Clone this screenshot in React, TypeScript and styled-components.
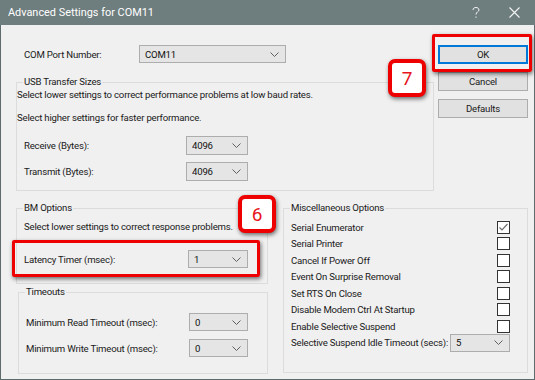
import React from 'react';
import styled, { createGlobalStyle } from 'styled-components';

const GlobalStyle = createGlobalStyle`
  html, body {
    margin: 0;
    padding: 0;
    background: #f0f0f0;
  }
  * {
    box-sizing: border-box;
  }
`;

const FONT = `'Segoe UI', Roboto, 'Noto Sans', sans-serif`;

const Window = styled.div`
  position: relative;
  width: 535px;
  height: 380px;
  display: flex;
  flex-direction: column;
  background: #f0f0f0;
  font-family: ${FONT};
  font-size: 9.6px;
  letter-spacing: -0.2px;
  color: #1a1a1a;
  overflow: hidden;
`;

const TitleBar = styled.div`
  height: 25px;
  flex: none;
  display: flex;
  align-items: center;
  padding-left: 8px;
  background: #6e7d7e;
  color: #ffffff;
  font-size: 10.9px;
  letter-spacing: 0;
`;

const TitleText = styled.span`
  flex: 1;
`;

const TitleButton = styled.div<{ w: number }>`
  width: ${(p) => p.w}px;
  height: 25px;
  display: flex;
  align-items: center;
  justify-content: center;
  color: #f4f4f4;
`;

const Body = styled.div`
  flex: 1;
  border: 1px solid #5d6b6c;
  border-top: none;
  padding: 20px 6px 0 15px;
  display: flex;
  flex-direction: column;
`;

const TopSection = styled.div`
  display: flex;
  gap: 4px;
`;

const LeftColumn = styled.div`
  width: 418px;
  display: flex;
  flex-direction: column;
`;

const ButtonColumn = styled.div`
  width: 90px;
  display: flex;
  flex-direction: column;
  gap: 8px;
`;

const DialogButton = styled.button<{ primary?: boolean }>`
  height: 19px;
  padding: 0;
  background: #e1e1e1;
  border: 1px solid ${(p) => (p.primary ? '#0078d7' : '#adadad')};
  box-shadow: ${(p) => (p.primary ? 'inset 0 0 0 1px #0078d7' : 'none')};
  font-family: ${FONT};
  font-size: 9.6px;
  letter-spacing: -0.2px;
  color: #1a1a1a;
`;

const Row = styled.div<{ labelWidth: number; h?: number }>`
  display: flex;
  align-items: center;
  height: ${(p) => p.h ?? 18}px;
  white-space: nowrap;
  & > span:first-child {
    width: ${(p) => p.labelWidth}px;
    flex: none;
  }
`;

const ComRow = styled(Row)`
  padding-left: 8px;
`;

const Combo = styled.div<{ w: number; h?: number }>`
  width: ${(p) => p.w}px;
  height: ${(p) => p.h ?? 18}px;
  flex: none;
  display: flex;
  align-items: center;
  justify-content: space-between;
  padding: 0 6px 0 5px;
  background: #e5e5e5;
  border: 1px solid #adadad;
  color: #111;
`;

const Group = styled.fieldset<{ w: number; h: number }>`
  width: ${(p) => p.w}px;
  height: ${(p) => p.h}px;
  margin: 0;
  padding: 0 7px 0 7px;
  min-width: 0;
  border: 1px solid #dcdcdc;
  display: flex;
  flex-direction: column;
`;

const Legend = styled.legend`
  padding: 0 1px;
  margin-left: -1px;
  line-height: 14px;
  color: #1a1a1a;
`;

const Note = styled.div<{ mt: number; outdent?: boolean }>`
  margin-top: ${(p) => p.mt}px;
  margin-left: ${(p) => (p.outdent ? -7 : 0)}px;
  line-height: 14px;
  white-space: nowrap;
`;

const BottomSection = styled.div`
  display: flex;
  gap: 15px;
  margin-top: 10px;
`;

const LeftStack = styled.div`
  display: flex;
  flex-direction: column;
  gap: 1px;
`;

const MiscList = styled.div`
  display: flex;
  flex-direction: column;
  margin-top: 4px;
`;

const MiscRow = styled.div`
  height: 16.5px;
  display: flex;
  align-items: center;
  justify-content: space-between;
  padding-right: 10px;
  white-space: nowrap;
`;

const Box = styled.div`
  width: 13px;
  height: 13px;
  border: 1px solid #333;
  background: #fff;
  display: flex;
  align-items: center;
  justify-content: center;
`;

const Annotation = styled.div<{ x: number; y: number; w: number; h: number }>`
  position: absolute;
  left: ${(p) => p.x}px;
  top: ${(p) => p.y}px;
  width: ${(p) => p.w}px;
  height: ${(p) => p.h}px;
  border: 3px solid #ee0000;
  border-radius: 2px;
  box-shadow: 1px 2px 4px rgba(0, 0, 0, 0.55);
  pointer-events: none;
`;

const Badge = styled.div<{ x: number; y: number }>`
  position: absolute;
  left: ${(p) => p.x}px;
  top: ${(p) => p.y}px;
  width: 38px;
  height: 38px;
  display: flex;
  align-items: center;
  justify-content: center;
  background: #fff;
  border: 4px solid #ee0000;
  border-radius: 7px;
  box-shadow: 1px 2px 4px rgba(0, 0, 0, 0.55);
  color: #e8141c;
  font-family: ${FONT};
  font-size: 19px;
  letter-spacing: 0;
`;

const Chevron = () => (
  <svg width="9" height="5" viewBox="0 0 9 5">
    <path d="M0.5 0.5 L4.5 4.5 L8.5 0.5" fill="none" stroke="#606060" strokeWidth="1" />
  </svg>
);

const ComboBox: React.FC<{ value: string; w: number; h?: number }> = ({ value, w, h }) => (
  <Combo w={w} h={h}>
    <span>{value}</span>
    <Chevron />
  </Combo>
);

const Check: React.FC<{ checked?: boolean }> = ({ checked }) => (
  <Box>
    {checked && (
      <svg width="11" height="11" viewBox="0 0 11 11">
        <path d="M1.5 5.5 L4 8 L9.5 2" fill="none" stroke="#6d6d6d" strokeWidth="1.2" />
      </svg>
    )}
  </Box>
);

const MISC_OPTIONS = [
  { label: 'Serial Enumerator', checked: true },
  { label: 'Serial Printer', checked: false },
  { label: 'Cancel If Power Off', checked: false },
  { label: 'Event On Surprise Removal', checked: false },
  { label: 'Set RTS On Close', checked: false },
  { label: 'Disable Modem Ctrl At Startup', checked: false },
  { label: 'Enable Selective Suspend', checked: false },
];

const App: React.FC = () => {
  return (
    <>
      <GlobalStyle />
      <Window>
        <TitleBar>
          <TitleText>Advanced Settings for COM11</TitleText>
          <TitleButton w={38}>
            <svg width="8" height="12" viewBox="0 0 8 12">
              <path
                d="M1 3 C1 1.2 2.4 0.5 4 0.5 C5.6 0.5 7 1.4 7 3 C7 4.6 4 5 4 7.5 M4 9.5 L4 10.8"
                fill="none"
                stroke="#f4f4f4"
                strokeWidth="1"
              />
            </svg>
          </TitleButton>
          <TitleButton w={38}>
            <svg width="11" height="11" viewBox="0 0 11 11">
              <path d="M0.5 0.5 L10.5 10.5 M10.5 0.5 L0.5 10.5" stroke="#f4f4f4" strokeWidth="1.1" />
            </svg>
          </TitleButton>
          <div style={{ width: 2 }} />
        </TitleBar>
        <Body>
          <TopSection>
            <LeftColumn>
              <ComRow labelWidth={115}>
                <span>COM Port Number:</span>
                <ComboBox value="COM11" w={147} />
              </ComRow>
              <Group w={418} h={116} style={{ marginTop: 12 }}>
                <Legend>USB Transfer Sizes</Legend>
                <Note mt={-1} outdent>
                  Select lower settings to correct performance problems at low baud rates.
                </Note>
                <Note mt={9} outdent>
                  Select higher settings for faster performance.
                </Note>
                <Row labelWidth={162} h={19} style={{ marginTop: 11 }}>
                  <span>Receive (Bytes):</span>
                  <ComboBox value="4096" w={62} h={19} />
                </Row>
                <Row labelWidth={162} h={19} style={{ marginTop: 7 }}>
                  <span>Transmit (Bytes):</span>
                  <ComboBox value="4096" w={62} h={19} />
                </Row>
              </Group>
            </LeftColumn>
            <ButtonColumn>
              <DialogButton primary>OK</DialogButton>
              <DialogButton>Cancel</DialogButton>
              <DialogButton>Defaults</DialogButton>
            </ButtonColumn>
          </TopSection>
          <BottomSection>
            <LeftStack>
              <Group w={252} h={83}>
                <Legend>BM Options</Legend>
                <Note mt={5}>Select lower settings to correct response problems.</Note>
                <Row labelWidth={164} h={18} style={{ marginTop: 16 }}>
                  <span>Latency Timer (msec):</span>
                  <ComboBox value="1" w={60} />
                </Row>
              </Group>
              <Group w={250} h={89} style={{ marginLeft: 2 }}>
                <Legend>Timeouts</Legend>
                <Row labelWidth={163} h={18} style={{ marginTop: 14 }}>
                  <span>Minimum Read Timeout (msec):</span>
                  <ComboBox value="0" w={59} />
                </Row>
                <Row labelWidth={163} h={18} style={{ marginTop: 8 }}>
                  <span>Minimum Write Timeout (msec):</span>
                  <ComboBox value="0" w={59} />
                </Row>
              </Group>
            </LeftStack>
            <Group w={248} h={172}>
              <Legend>Miscellaneous Options</Legend>
              <MiscList>
                {MISC_OPTIONS.map((opt) => (
                  <MiscRow key={opt.label}>
                    <span>{opt.label}</span>
                    <Check checked={opt.checked} />
                  </MiscRow>
                ))}
                <MiscRow>
                  <span>Selective Suspend Idle Timeout (secs):</span>
                  <ComboBox value="5" w={60} />
                </MiscRow>
              </MiscList>
            </Group>
          </BottomSection>
        </Body>
        <Annotation x={432} y={34} w={100} h={38} />
        <Annotation x={12} y={240} w={248} h={37} />
        <Badge x={388} y={59}>7</Badge>
        <Badge x={238} y={195}>6</Badge>
      </Window>
    </>
  );
};

export default App;
